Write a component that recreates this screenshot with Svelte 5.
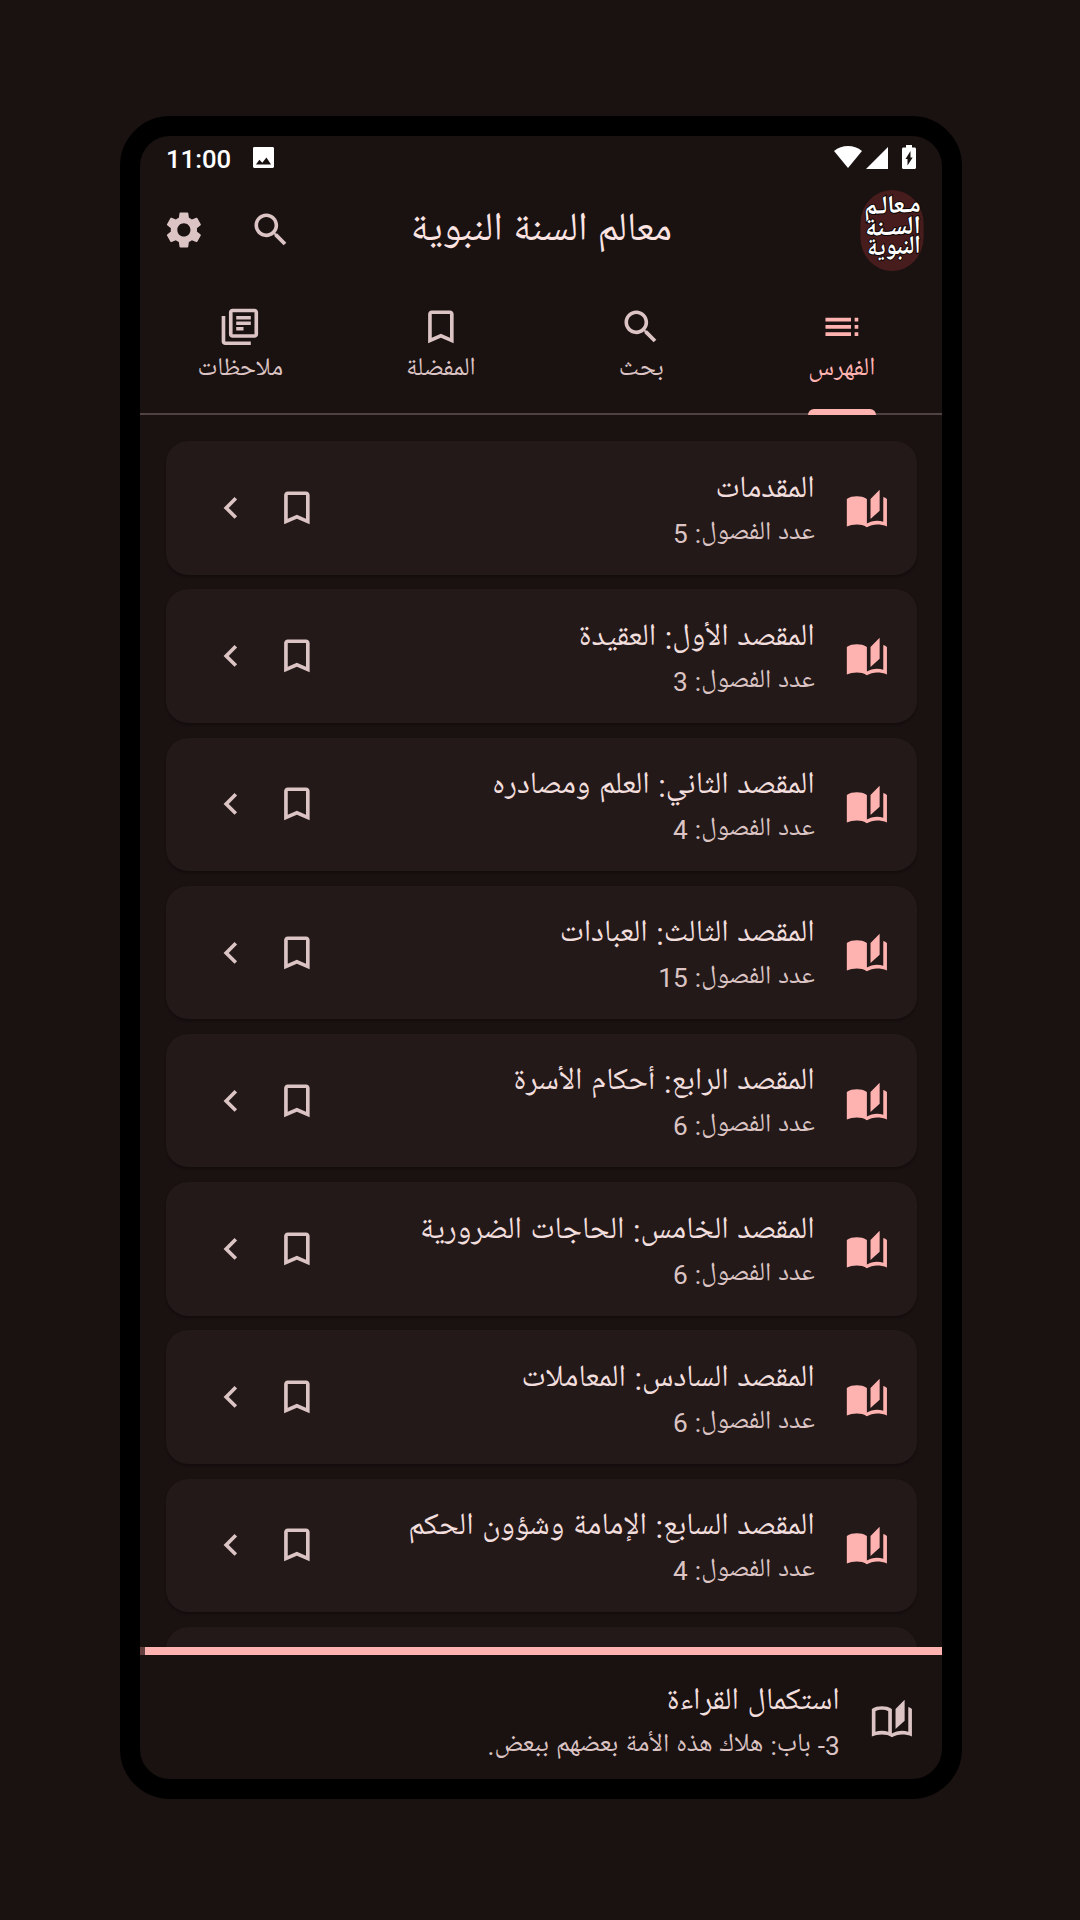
<script>
  const tabs = [
    { label: 'الفهرس', icon: 'toc', active: true },
    { label: 'بحث', icon: 'search' },
    { label: 'المفضلة', icon: 'bookmark' },
    { label: 'ملاحظات', icon: 'notes' },
  ];

  const sections = [
    { title: 'المقدمات', count: 5 },
    { title: 'المقصد الأول: العقيدة', count: 3 },
    { title: 'المقصد الثاني: العلم ومصادره', count: 4 },
    { title: 'المقصد الثالث: العبادات', count: 15 },
    { title: 'المقصد الرابع: أحكام الأسرة', count: 6 },
    { title: 'المقصد الخامس: الحاجات الضرورية', count: 6 },
    { title: 'المقصد السادس: المعاملات', count: 6 },
    { title: 'المقصد السابع: الإمامة وشؤون الحكم', count: 4 },
  ];

  // Slanted page plus the right-hand cover edge, shared by both book icons
  const bookRight = 'M19 1l-5 5v11l5-4.5V1zM21 5v13.5c-1.1-.35-2.3-.5-3.5-.5-1.7 0-4.15.65-5.500 1.500v2c1.350-.85 3.800-1.500 5.500-1.500 1.850 0 3.900.350 5.500 1.100V6c-.6-.45-1.250-.75-2-1z';
  const bookLeft = 'M1 6c1.450-1.100 3.550-1.500 5.500-1.500S10.550 4.900 12 6v15.500c-1.450-1.100-3.550-1.500-5.500-1.500-1.900 0-4 .4-5.500 1.100z';

  const paths = {
    toc: 'M3 9h14V7H3v2zm0 4h14v-2H3v2zm0 4h14v-2H3v2zm16 0h2v-2h-2v2zm0-10v2h2V7h-2zm0 6h2v-2h-2v2z',
    search: 'M15.5 14h-.79l-.28-.27C15.41 12.59 16 11.11 16 9.5 16 5.91 13.09 3 9.5 3S3 5.91 3 9.5 5.91 16 9.5 16c1.61 0 3.09-.59 4.23-1.57l.27.28v.79l5 4.99L20.49 19l-4.99-5zm-6 0C7.01 14 5 11.99 5 9.5S7.01 5 9.5 5 14 7.01 14 9.5 11.99 14 9.5 14z',
    bookmark: 'M17 3H7c-1.1 0-1.99.9-1.99 2L5 21l7-3 7 3V5c0-1.1-.9-2-2-2zm0 15l-5-2.18L7 18V5h10v13z',
    notes: 'M4 6H2v14c0 1.1.9 2 2 2h14v-2H4V6zm16-4H8c-1.1 0-2 .9-2 2v12c0 1.1.9 2 2 2h12c1.1 0 2-.9 2-2V4c0-1.1-.9-2-2-2zm0 14H8V4h12v12zM10 9h8v2h-8zm0 3h4v2h-4zm0-6h8v2h-8z',
    chevron: 'M15.41 7.41L14 6l-6 6 6 6 1.41-1.41L10.83 12z',
    settings: 'M19.14 12.94c.04-.3.06-.61.06-.94 0-.32-.02-.64-.07-.94l2.03-1.58c.18-.14.23-.41.12-.61l-1.92-3.32c-.12-.22-.37-.29-.59-.22l-2.39.96c-.5-.38-1.03-.7-1.62-.94l-.36-2.54c-.04-.24-.24-.41-.48-.41h-3.84c-.24 0-.43.17-.47.41l-.36 2.54c-.59.24-1.13.57-1.62.94l-2.39-.96c-.22-.08-.47 0-.59.22L2.74 8.87c-.12.21-.08.47.12.61l2.03 1.58c-.05.3-.09.63-.09.94s.02.64.07.94l-2.03 1.58c-.18.14-.23.41-.12.61l1.92 3.32c.12.22.37.29.59.22l2.39-.96c.5.38 1.03.7 1.62.94l.36 2.54c.05.24.24.41.48.41h3.84c.24 0 .44-.17.47-.41l.36-2.54c.59-.24 1.13-.56 1.62-.94l2.39.96c.22.08.47 0 .59-.22l1.92-3.32c.12-.22.07-.47-.12-.61l-2.01-1.58zM12 15.6c-1.98 0-3.6-1.62-3.6-3.6s1.62-3.6 3.6-3.6 3.6 1.62 3.6 3.6-1.62 3.6-3.6 3.6z',
    book: bookLeft + bookRight,
    bookOutline: bookLeft + 'M3 7.200c1-.4 2.300-.7 3.500-.7s2.500.250 3.500.700v11.300c-1-.35-2.200-.5-3.500-.5s-2.500.150-3.500.500z' + bookRight,
  };
</script>

{#snippet icon(name)}
  <svg class="icon" viewBox="0 0 24 24" aria-hidden="true"><path d={paths[name]} fill-rule="evenodd" /></svg>
{/snippet}

<main dir="rtl">
  <div class="phone">
    <div class="status" dir="ltr">
      <span class="clock">11:00</span>
      <svg class="photo" viewBox="0 0 18 18"><path d="M18 16.800V1.200C18 .5 17.500 0 16.800 0H1.200C.5 0 0 .5 0 1.200v15.600c0 .7.500 1.200 1.200 1.200h15.600c.7 0 1.200-.5 1.200-1.200zM2.500 15l3-4 2.500 2.500L11.500 9l4 6z" fill-rule="evenodd" /></svg>
      <svg class="wifi" viewBox="0 0 28 22"><path d="M14 22L0 5C4 1.700 9 0 14 0s10 1.700 14 5z" /></svg>
      <svg class="signal" viewBox="0 0 22 22"><path d="M0 22H22V0z" /></svg>
      <svg class="battery" viewBox="0 0 14 24"><path fill-rule="evenodd" d="M12.500 2.500H10V0H4v2.500H1.500C.6 2.500 0 3.100 0 4v18.500c0 .9.600 1.500 1.500 1.500h11c.9 0 1.500-.6 1.500-1.500V4c0-.9-.6-1.500-1.500-1.500zM5.500 20.500v-6.500H3.500L8.500 6v6.500h2.200z" /></svg>
    </div>

    <header>
      <svg class="logo" viewBox="0 0 64 82">
        <rect width="64" height="82" rx="32" ry="34" />
        <g transform="skewY(-3)">
          <text x="61" y="25" textLength="57" lengthAdjust="spacingAndGlyphs">مـعالـم</text>
          <text x="61" y="47" textLength="56" lengthAdjust="spacingAndGlyphs">السـنة</text>
          <text x="61" y="67" textLength="54" lengthAdjust="spacingAndGlyphs">النبوية</text>
        </g>
      </svg>
      <h1>معالم السنة النبوية</h1>
      <div class="actions">
        {@render icon('search')}
        {@render icon('settings')}
      </div>
    </header>

    <nav>
      {#each tabs as tab}
        <div class="tab" class:active={tab.active}>
          {@render icon(tab.icon)}
          <span class="label">{tab.label}</span>
        </div>
      {/each}
    </nav>

    <div class="list">
      {#each sections as section}
        <article>
          <span class="lead">{@render icon('book')}</span>
          <div class="text">
            <h2>{section.title}</h2>
            <p>عدد الفصول: {section.count}</p>
          </div>
          {@render icon('bookmark')}
          {@render icon('chevron')}
        </article>
      {/each}
      <article></article>
    </div>

    <div class="progress"><span></span></div>
    <footer>
      {@render icon('bookOutline')}
      <div class="text">
        <h2>استكمال القراءة</h2>
        <p>3- باب: هلاك هذه الأمة بعضهم ببعض.</p>
      </div>
    </footer>
  </div>
</main>

<style>
  :global(body) { background: #1a1111; }
  main {
    box-sizing: border-box;
    height: 1920px;
    width: 1080px;
    padding: 116px 118px 0 120px;
    background: #1a1111;
    font-family: Roboto, "Noto Naskh Arabic UI", "Noto Naskh Arabic", sans-serif;
    color: #f1dedd;
  }
  h1, h2, p { margin: 0; font-weight: 400; white-space: nowrap; }
  .phone {
    box-sizing: border-box;
    height: 1683px;
    border: 20px solid #000;
    border-radius: 50px;
    display: flex;
    flex-direction: column;
    overflow: hidden;
    background: #1a1111;
  }
  .icon { width: 43.75px; height: 43.75px; fill: #dbc4c3; flex: none; display: block; }

  .status { display: flex; align-items: flex-start; height: 48px; padding: 0 26px; fill: #fff; flex: none; }
  .status svg { flex: none; }
  .clock { color: #fff; font-weight: 500; font-size: 25.7px; line-height: 30px; margin-top: 8px; width: 87px; }
  .photo { width: 21px; height: 21px; margin-top: 11px; margin-right: auto; }
  .wifi { width: 28px; height: 22px; margin-top: 10px; }
  .signal { width: 22px; height: 22px; margin: 11px 14px 0 4px; }
  .battery { width: 14px; height: 24px; margin-top: 9px; }

  header { height: 92px; display: flex; align-items: center; flex: none; padding: 0 18px 0 22px; }
  .logo { width: 64px; height: 81px; overflow: visible; flex: none; }
  .logo rect { fill: #471c1c; }
  .logo text {
    font: 700 26px "Noto Naskh Arabic", serif;
    fill: #fff;
    stroke: #0a0505;
    stroke-width: 2px;
    paint-order: stroke;
    direction: rtl;
  }
  h1 { flex: 1; font-size: 40px; line-height: 48px; text-align: right; padding: 4px 188px 0 0; color: #fbe3e2; }
  .actions { display: flex; gap: 43.5px; }

  nav { height: 139px; box-sizing: border-box; display: flex; flex: none; border-bottom: 2px solid #524343; }
  .tab { flex: 1; display: flex; flex-direction: column; align-items: center; padding-top: 29px; color: #dbc4c3; position: relative; }
  .label { font-size: 25.5px; line-height: 36px; margin-top: 2.500px; }
  .tab.active { color: #ffb3b1; }
  .tab.active .icon { fill: #ffb3b1; }
  .tab.active::after { content: ""; position: absolute; bottom: -2px; width: 68px; height: 6px; border-radius: 6px 6px 0 0; background: #ffb3b1; }

  .list { flex: 1; overflow: hidden; padding: 26.3px 25px 0 26px; min-height: 0; }
  article {
    box-sizing: border-box;
    height: 133.3px;
    margin-bottom: 14.9px;
    border-radius: 22px;
    background: #231919;
    box-shadow: 0 1.5px 2px rgba(0, 0, 0, .25);
    display: flex;
    align-items: center;
    padding: 0 28.5px 0 43px;
  }
  article .icon + .icon { margin-right: 22px; }
  .lead .icon { fill: #ffb3b1; margin-top: 3.5px; }
  .text { flex: 1; padding-right: 30px; padding-top: 4.5px; }
  h2 { font-size: 31px; letter-spacing: .9px; word-spacing: .9px; line-height: 44px; color: #f1dedd; }
  p { font-size: 26.2px; letter-spacing: .4px; word-spacing: .5px; line-height: 36px; margin-top: 3px; color: #dbc4c3; }

  .progress { height: 8px; background: #ffb3b1; flex: none; display: flex; justify-content: flex-end; }
  .progress span { width: 5px; background: #653f3f; }
  footer { height: 124.5px; box-sizing: border-box; flex: none; display: flex; align-items: center; padding: 6.5px 28.5px 0; }
</style>
